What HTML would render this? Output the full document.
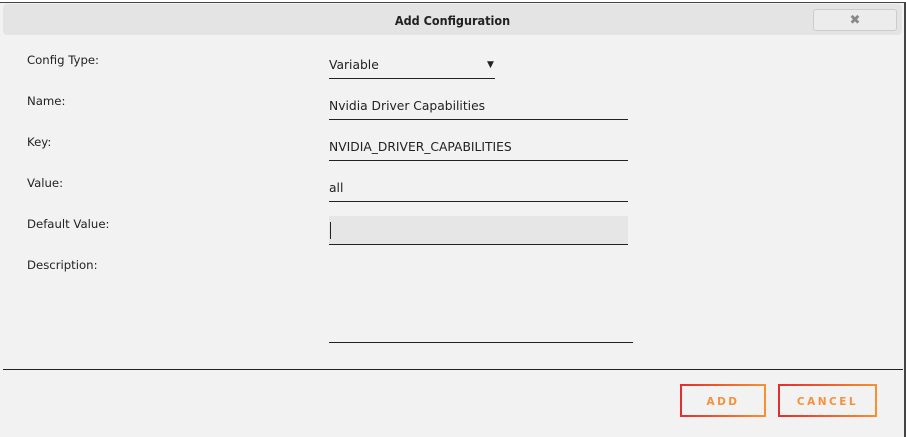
<!DOCTYPE html>
<html><head><style>
*{margin:0;padding:0;box-sizing:border-box}
body{width:906px;height:437px;background:#fff;font-family:"DejaVu Sans","Liberation Sans",sans-serif;font-size:12px;color:#222;position:relative;overflow:hidden}
.dlg{position:absolute;left:0;top:2px;width:906px;height:435px;background:#f2f2f2;border-top:1px solid #444;border-right:2px solid #444}
.title{position:absolute;left:3px;top:4px;width:899px;height:31px;background:#e4e4e4;border-radius:4px;text-align:center;line-height:33px;font-weight:bold;font-family:"DejaVu Sans Condensed","Liberation Sans Narrow",sans-serif;font-size:12.5px}
.x{position:absolute;left:813px;top:9px;width:84px;height:22px;border:1px solid #ccc;border-radius:3px;background:#ececec;text-align:center;line-height:22px;color:#888;font-size:13px;font-weight:bold}
.l{position:absolute;left:27px;font-family:"DejaVu Sans","Liberation Sans",sans-serif;font-size:11.7px}
.f{position:absolute;left:329px;width:299px;border-bottom:1px solid #222;font-family:"DejaVu Sans","Liberation Sans",sans-serif;font-size:12.3px;padding-bottom:6px}
.btn{position:absolute;top:384px;height:33px;border:2px solid;border-image:linear-gradient(90deg,#e52d2d,#f7902f) 1;color:#f7903a;font-weight:bold;font-size:10.5px;letter-spacing:2.5px;text-align:center;line-height:32px}
</style></head><body>
<div class="dlg"></div>
<div class="title">Add Configuration</div>
<div class="x">✖</div>
<div class="l" style="top:53px">Config Type:</div>
<div class="l" style="top:94px">Name:</div>
<div class="l" style="top:135px">Key:</div>
<div class="l" style="top:176px">Value:</div>
<div class="l" style="top:217px">Default Value:</div>
<div class="l" style="top:258px">Description:</div>
<div class="f" style="top:58px;width:166px;padding-bottom:6px">Variable<span style="position:absolute;left:158px;font-size:9px;top:2px">▼</span></div>
<div class="f" style="top:99px">Nvidia Driver Capabilities</div>
<div class="f" style="top:140px">NVIDIA_DRIVER_CAPABILITIES</div>
<div class="f" style="top:181px">all</div>
<div class="f" style="top:216px;height:29px;background:#e6e6e6"><span style="position:absolute;left:1px;top:6px;width:1px;height:17px;background:#222"></span></div>
<div style="position:absolute;left:329px;top:342px;width:304px;height:1px;background:#222"></div>
<div style="position:absolute;left:3px;top:369px;width:900px;height:1px;background:#222"></div>
<div class="btn" style="left:680px;width:86px">ADD</div>
<div class="btn" style="left:778px;width:99px">CANCEL</div>
</body></html>
